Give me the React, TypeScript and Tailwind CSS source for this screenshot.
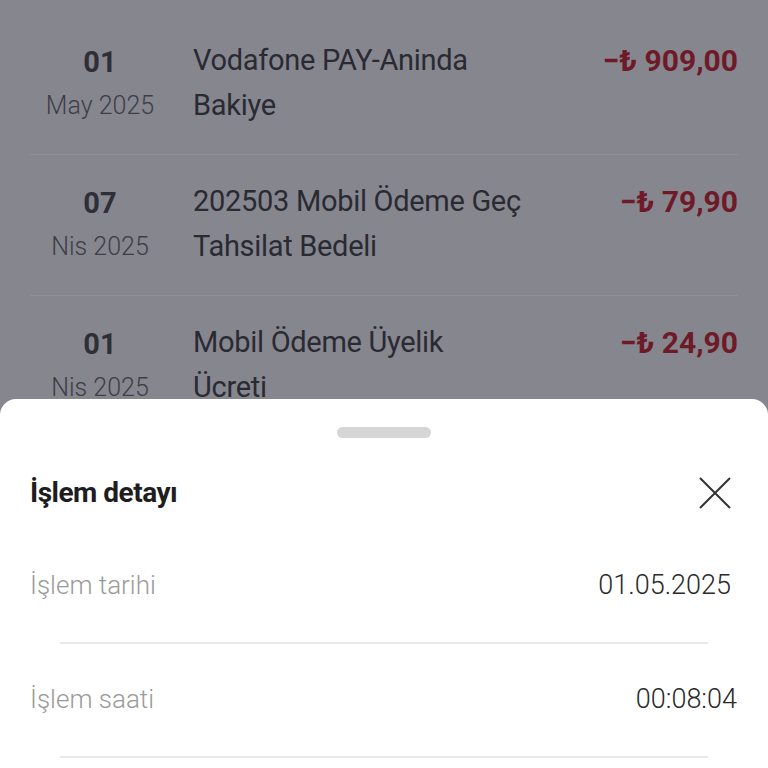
import React from "react";

type Hareket = {
  gun: string;
  ay: string;
  aciklama: string[];
  tutar: string;
};

const hareketler: Hareket[] = [
  { gun: "01", ay: "May 2025", aciklama: ["Vodafone PAY-Aninda", "Bakiye"], tutar: "−₺ 909,00" },
  { gun: "07", ay: "Nis 2025", aciklama: ["202503 Mobil Ödeme Geç", "Tahsilat Bedeli"], tutar: "−₺ 79,90" },
  { gun: "01", ay: "Nis 2025", aciklama: ["Mobil Ödeme Üyelik", "Ücreti"], tutar: "−₺ 24,90" },
];

const detaylar = [
  { etiket: "İşlem tarihi", deger: "01.05.2025", pr: "pr-[37px]" },
  { etiket: "İşlem saati", deger: "00:08:04", pr: "pr-[31px]" },
];

const App: React.FC = () => {
  return (
    <div
      className="relative h-[768px] w-[768px] overflow-hidden bg-[#86868f]"
      style={{ fontFamily: "Roboto, 'Noto Sans', sans-serif" }}
    >
      {/* arka plandaki hareket listesi */}
      <div className="px-[30px] pt-[14px]">
        {hareketler.map((h, i) => (
          <div key={i} className="flex h-[141px] border-b border-[#8f8f98] pt-[24px]">
            <div className="flex w-[140px] flex-col items-center">
              <span className="text-[29px] font-bold leading-[48px] text-[#2f2f37]">{h.gun}</span>
              <span className="text-[25px] font-light leading-[40px] text-[#3e3e46]">{h.ay}</span>
            </div>
            <div className="ml-[23px] flex-1 text-[29px] leading-[45px] tracking-[-0.3px] text-[#2a2a33]">
              {h.aciklama.map((s, j) => (
                <div key={j}>{s}</div>
              ))}
            </div>
            <div className="text-[30px] font-bold leading-[45px] text-[#6e1a28]">{h.tutar}</div>
          </div>
        ))}
      </div>

      {/* alt sayfa */}
      <div className="absolute inset-x-0 top-[399px] bottom-0 rounded-t-[16px] bg-white">
        <div className="flex justify-center pt-[28px]">
          <div className="h-[11px] w-[94px] rounded-full bg-[#d6d6d6]" />
        </div>
        <div className="flex h-[32px] items-center justify-between pl-[30px] pr-[36px] mt-[39px]">
          <span className="text-[28px] font-bold tracking-[-0.5px] text-[#1e1e1e]">İşlem detayı</span>
          <svg width="34" height="34" viewBox="0 0 34 34" fill="none" stroke="#333" strokeWidth="2">
            <path d="M2 2L32 32M32 2L2 32" />
          </svg>
        </div>
        <div className="mt-[56px] flex flex-col gap-[35px]">
          {detaylar.map((d, i) => (
            <div key={i}>
              <div className={`flex h-[40px] items-center justify-between pl-[30px] ${d.pr}`}>
                <span className="text-[26px] font-light text-[#9a9a9a]">{d.etiket}</span>
                <span className="text-[27px] font-light text-[#2a2a2a]">{d.deger}</span>
              </div>
              <div className="mx-[60px] mt-[37px] h-[2px] bg-[#e8e8e8]" />
            </div>
          ))}
        </div>
      </div>
    </div>
  );
};

export default App;
